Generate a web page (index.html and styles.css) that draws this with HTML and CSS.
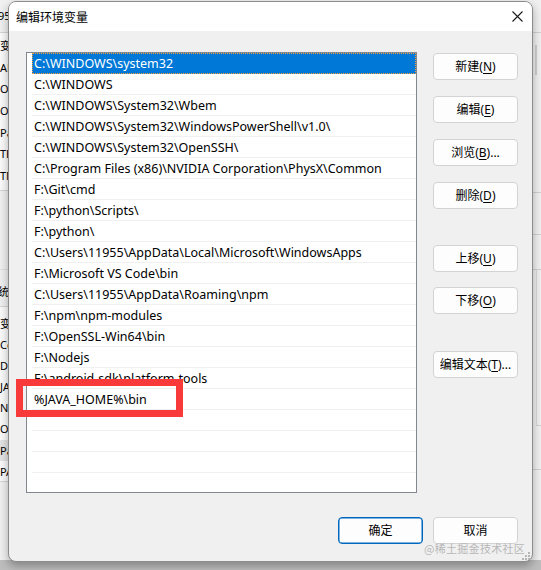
FILE: index.html
```html
<!DOCTYPE html>
<html>
<head>
<meta charset="utf-8">
<link rel="stylesheet" href="styles.css">
</head>
<body>
<div class="backwin">
  <div class="bw-left">
    <div class="bwl-head">95</div>
    <div class="bwl-list">
      <div class="bwr">变量</div>
      <div class="bwr">ANDROID_HOME</div>
      <div class="bwr">OneDrive</div>
      <div class="bwr">OneDriveConsumer</div>
      <div class="bwr">Path</div>
      <div class="bwr">TEMP</div>
      <div class="bwr">TMP</div>
    </div>
    <div class="bwl-gap"></div>
    <div class="bwl-label">系统变量(S)</div>
    <div class="bwl-list2">
      <div class="bwr2">变量</div>
      <div class="bwr2">ComSpec</div>
      <div class="bwr2">DriverData</div>
      <div class="bwr2">JAVA_HOME</div>
      <div class="bwr2">NUMBER_OF_PROCESSORS</div>
      <div class="bwr2">OS</div>
      <div class="bwr2 hl">Path</div>
      <div class="bwr2">PATHEXT</div>
    </div>
  </div>
  <div class="bw-right">
    <div class="bwr-head"></div>
    <div class="bwr-thumb"></div>
    <div class="bwr-a"></div>
    <div class="bwr-b"></div>
    <div class="bwr-c"></div>
    <div class="bwr-d"></div>
    <div class="bwr-e"></div>
  </div>
</div>

<div class="dialog">
  <div class="titlebar">
    <span class="title">编辑环境变量</span>
    <svg class="close" width="11" height="11" viewBox="0 0 11 11"><path d="M0.5 0.5 L10.5 10.5 M10.5 0.5 L0.5 10.5" stroke="#1a1a1a" stroke-width="1.1" fill="none"/></svg>
  </div>
  <div class="client">
    <div class="main">
      <div class="listbox">
        <div class="row sel">C:\WINDOWS\system32</div>
        <div class="row">C:\WINDOWS</div>
        <div class="row">C:\WINDOWS\System32\Wbem</div>
        <div class="row">C:\WINDOWS\System32\WindowsPowerShell\v1.0\</div>
        <div class="row">C:\WINDOWS\System32\OpenSSH\</div>
        <div class="row">C:\Program Files (x86)\NVIDIA Corporation\PhysX\Common</div>
        <div class="row">F:\Git\cmd</div>
        <div class="row">F:\python\Scripts\</div>
        <div class="row">F:\python\</div>
        <div class="row">C:\Users\11955\AppData\Local\Microsoft\WindowsApps</div>
        <div class="row">F:\Microsoft VS Code\bin</div>
        <div class="row">C:\Users\11955\AppData\Roaming\npm</div>
        <div class="row">F:\npm\npm-modules</div>
        <div class="row">F:\OpenSSL-Win64\bin</div>
        <div class="row">F:\Nodejs</div>
        <div class="row">F:\android-sdk\platform-tools</div>
        <div class="row">%JAVA_HOME%\bin</div>
        <div class="row"></div>
        <div class="row"></div>
        <div class="row"></div>
      </div>
      <div class="side">
        <button class="btn">新建(<u>N</u>)</button>
        <button class="btn">编辑(<u>E</u>)</button>
        <button class="btn">浏览(<u>B</u>)...</button>
        <button class="btn">删除(<u>D</u>)</button>
        <button class="btn up">上移(<u>U</u>)</button>
        <button class="btn down">下移(<u>O</u>)</button>
        <button class="btn edittext">编辑文本(<u>T</u>)...</button>
      </div>
    </div>
    <div class="footer">
      <button class="btn primary">确定</button>
      <button class="btn">取消</button>
    </div>
  </div>
  <svg class="grip" width="9" height="9" viewBox="0 0 9 9">
    <rect x="7" y="1" width="2" height="2" fill="#b5b5b5"/>
    <rect x="4" y="4" width="2" height="2" fill="#b5b5b5"/>
    <rect x="7" y="4" width="2" height="2" fill="#b5b5b5"/>
    <rect x="1" y="7" width="2" height="2" fill="#b5b5b5"/>
    <rect x="4" y="7" width="2" height="2" fill="#b5b5b5"/>
    <rect x="7" y="7" width="2" height="2" fill="#b5b5b5"/>
  </svg>
</div>

<div class="mark"></div>
<div class="watermark">@稀土掘金技术社区</div>
</body>
</html>
```

FILE: styles.css
```css
* { box-sizing: border-box; }
html, body { margin: 0; padding: 0; }
body {
  width: 541px;
  height: 570px;
  overflow: hidden;
  position: relative;
  background: #bdbdbd;
  font-family: "Noto Sans", "Noto Sans CJK SC", sans-serif;
  font-size: 12px;
  color: #000;
}

/* window behind the dialog */
.backwin {
  position: absolute;
  left: 0; top: 0;
  width: 541px; height: 560px;
  background: #f0f0f0;
}
.bw-left {
  position: absolute;
  left: 0; top: 0;
  width: 40px;
  overflow: hidden;
  display: flex;
  flex-direction: column;
  font-size: 11px;
}
.bwl-head {
  height: 33px;
  line-height: 32px;
  border-bottom: 1px solid #d4d4d4;
  text-indent: -2px;
  white-space: nowrap;
}
.bwl-list {
  height: 158px;
  background: #fafafa;
  border-bottom: 1px solid #d4d4d4;
  padding-top: 2px;
}
.bwr { height: 21.7px; line-height: 21.7px; white-space: nowrap; }
.bwr2 { height: 21.1px; line-height: 21.1px; white-space: nowrap; }
.bwr2.hl { background: #e3e3e3; }
.bwl-gap { height: 79px; border-bottom: 1px solid #e0e0e0; }
.bwl-label {
  height: 36px;
  padding-top: 12px;
  line-height: 20px;
  text-indent: -13px;
  white-space: nowrap;
}
.bwl-list2 {
  height: 176px;
  background: #fafafa;
  border-top: 1px solid #d4d4d4;
  border-bottom: 1px solid #d4d4d4;
  padding-top: 6px;
}
.bw-right {
  position: absolute;
  right: 0; top: 0;
  width: 8px;
  display: flex;
  flex-direction: column;
}
.bwr-head { height: 33px; border-bottom: 1px solid #d0d0d0; }
.bwr-thumb { margin: 12px 0 0 2px; width: 2px; height: 30px; background: #cfcfcf; }
.bwr-a { height: 118px; border-bottom: 1px solid #d0d0d0; }
.bwr-b { height: 42px; border-bottom: 1px solid #d0d0d0; }
.bwr-c { height: 35px; border-bottom: 1px solid #d0d0d0; }
.bwr-d { margin-left: 3px; height: 156px; border-left: 1px solid #dadada; border-bottom: 1px solid #d0d0d0; }
.bwr-e { height: 44px; border-bottom: 1px solid #d0d0d0; }

/* dialog */
.dialog {
  position: absolute;
  left: 8px; top: 1px;
  width: 525px; height: 561px;
  border: 1px solid #8c8c8c;
  border-radius: 8px;
  background: #f0f0f0;
  overflow: hidden;
  display: flex;
  flex-direction: column;
  box-shadow: 0 4px 10px rgba(0,0,0,0.3);
}
.titlebar {
  height: 29px;
  flex: none;
  background: #fff;
  display: flex;
  align-items: center;
  justify-content: space-between;
  padding: 0 9px 0 7px;
}
.title {
  font-family: "Noto Sans CJK SC", sans-serif;
  font-size: 12px;
  line-height: 16px;
  padding-top: 1px;
}
.close { display: block; margin-top: -1px; }

.client {
  flex: 1;
  padding: 21px 14px 0 17px;
  display: flex;
  flex-direction: column;
}
.main {
  display: flex;
  gap: 16px;
}
.listbox {
  width: 391px;
  height: 441px;
  background: #fff;
  border: 1px solid #828790;
  padding-left: 5px;
  overflow: hidden;
}
.row {
  height: 21px;
  padding-top: 2px;
  line-height: 18px;
  font-size: 12.5px;
  border-bottom: 1px solid #f0f0f0;
  padding-left: 2px;
  white-space: nowrap;
  overflow: hidden;
}
.row.sel {
  background: #0078d7;
  color: #fff;
  outline: 1px dotted #f7a13a;
  outline-offset: -1px;
  border-bottom-color: #0078d7;
}

.side {
  width: 85px;
  display: flex;
  flex-direction: column;
  gap: 16px;
  padding-top: 1px;
}
.btn {
  height: 27px;
  width: 85px;
  padding: 0;
  margin: 0;
  border: 1px solid #d3d3d3;
  border-radius: 4px;
  background: #fdfdfd;
  font-family: "Noto Sans", "Noto Sans CJK SC", sans-serif;
  font-size: 12px;
  line-height: 25px;
  color: #000;
  text-align: center;
  white-space: nowrap;
}
.btn u { text-underline-offset: 2px; }
.btn.up { margin-top: 20px; }
.btn.down { margin-top: -1px; }
.btn.edittext { margin-top: 21px; }

.footer {
  margin-top: 24px;
  display: flex;
  justify-content: flex-end;
  gap: 10px;
}
.btn.primary {
  border: 1px solid #0067c0;
  box-shadow: inset 0 0 0 0.5px #0067c0;
}

.grip {
  position: absolute;
  right: 2px;
  bottom: 1px;
}

/* annotation overlay */
.mark {
  position: absolute;
  left: 16px; top: 379px;
  width: 167px; height: 38px;
  border: 7px solid #f83a3a;
}
.watermark {
  position: absolute;
  left: 424px; top: 541px;
  font-family: "Noto Sans CJK SC", sans-serif;
  font-size: 11px;
  line-height: 15px;
  letter-spacing: 0.3px;
  color: #b8b8b8;
  white-space: nowrap;
}
```
